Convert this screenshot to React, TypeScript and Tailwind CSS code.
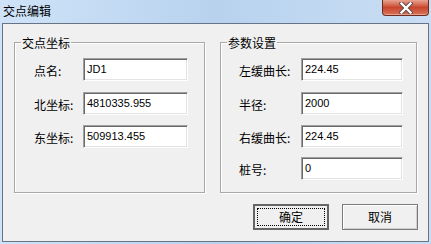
const cjk = "font-['Noto_Sans_CJK_SC','Noto_Sans',sans-serif]";

interface IField {
  label: string;
  value: string;
  gap: string;
}

const leftFields: IField[] = [
  { label: '点名:', value: 'JD1', gap: 'mt-[15px]' },
  { label: '北坐标:', value: '4810335.955', gap: 'mt-[11px]' },
  { label: '东坐标:', value: '509913.455', gap: 'mt-[10px]' },
];

const rightFields: IField[] = [
  { label: '左缓曲长:', value: '224.45', gap: 'mt-[15px]' },
  { label: '半径:', value: '2000', gap: 'mt-[11px]' },
  { label: '右缓曲长:', value: '224.45', gap: 'mt-[10px]' },
  { label: '桩号:', value: '0', gap: 'mt-[9px]' },
];

function Field({
  field,
  labelWidth,
  inputWidth,
}: {
  field: IField;
  labelWidth: string;
  inputWidth: string;
}) {
  return (
    <div className={`flex items-center ${field.gap}`}>
      <span className={`${labelWidth} ${cjk} text-[12px] leading-none text-black pt-[2px]`}>
        {field.label}
      </span>
      <div
        className={`${inputWidth} h-[23px] bg-white border border-t-[#a0a0a0] border-l-[#a0a0a0] border-b-white border-r-white shadow-[inset_1px_1px_0_#696969,inset_-1px_-1px_0_#e3e3e3] flex items-center pl-[3px] font-['Liberation_Sans',sans-serif] text-[11px] text-black`}
      >
        {field.value}
      </div>
    </div>
  );
}

function GroupBox({
  title,
  width,
  children,
}: {
  title: string;
  width: string;
  children: React.ReactNode;
}) {
  return (
    <div
      className={`relative ${width} h-[151px] border border-[#a8a8a8] shadow-[inset_1px_1px_0_#ffffff,1px_1px_0_#ffffff]`}
    >
      <span
        className={`absolute left-[6px] top-[-8px] px-[1px] bg-[#f0f0f0] ${cjk} text-[12px] leading-[15px] text-black`}
      >
        {title}
      </span>
      {children}
    </div>
  );
}

export default function App() {
  return (
    <div className="w-[431px] h-[244px] flex flex-col bg-gradient-to-r from-[#cfe3f8] via-[#b8d2ee] to-[#c9def4] overflow-hidden">
      <div className="h-[23px] flex justify-between pl-[3px] pr-[2px]">
        <span className={`${cjk} text-[12px] leading-none text-black pt-[5px]`}>交点编辑</span>
        <div className="w-[47px] h-[16px] rounded-b-[4px] border border-t-0 border-[#6b2c22] bg-gradient-to-b from-[#e7a391] via-[#c8452c] to-[#d7735a] flex items-center justify-center shadow-[inset_0_-1px_0_#e9a08c]">
          <svg width="14" height="12" viewBox="0 0 14 12">
            <path
              d="M2.5 1.5 L11.5 10.5 M11.5 1.5 L2.5 10.5"
              stroke="#5a4a48"
              strokeWidth="4.2"
              strokeLinecap="square"
            />
            <path
              d="M2.5 1.5 L11.5 10.5 M11.5 1.5 L2.5 10.5"
              stroke="#ffffff"
              strokeWidth="2.4"
              strokeLinecap="square"
            />
          </svg>
        </div>
      </div>
      <div className="ml-[2px] mr-[2px] h-[219px] bg-[#f0f0f0] border border-[#667486] flex flex-col">
        <div className="flex gap-[15px] pl-[11px] pt-[18px]">
          <GroupBox title="交点坐标" width="w-[191px]">
            <div className="flex flex-col pl-[19px]">
              {leftFields.map((f) => (
                <Field key={f.label} field={f} labelWidth="w-[49px]" inputWidth="w-[105px]" />
              ))}
            </div>
          </GroupBox>
          <GroupBox title="参数设置" width="w-[197px]">
            <div className="flex flex-col pl-[18px]">
              {rightFields.map((f) => (
                <Field key={f.label} field={f} labelWidth="w-[62px]" inputWidth="w-[102px]" />
              ))}
            </div>
          </GroupBox>
        </div>
        <div className="flex justify-end gap-[13px] pr-[10px] mt-[11px]">
          <button className="w-[76px] h-[26px] border-2 border-[#666666] bg-[#f0f0f0] p-[2px]">
            <div
              className={`w-full h-full border border-dotted border-black flex items-center justify-center ${cjk} text-[12px] leading-none text-black`}
            >
              确定
            </div>
          </button>
          <button
            className={`w-[76px] h-[26px] border border-[#7a7a7a] bg-[#f0f0f0] shadow-[inset_1px_1px_0_#ffffff,inset_-1px_-1px_0_#d0d0d0] flex items-center justify-center ${cjk} text-[12px] leading-none text-black`}
          >
            取消
          </button>
        </div>
      </div>
    </div>
  );
}
